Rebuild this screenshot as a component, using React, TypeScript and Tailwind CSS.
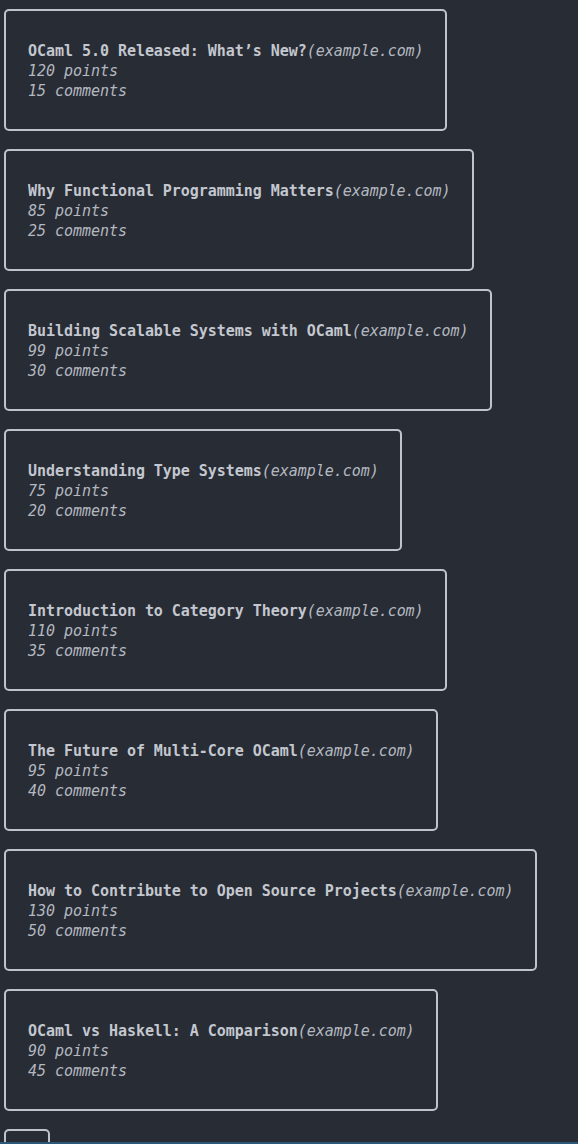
const stories = [
  { title: "OCaml 5.0 Released: What’s New?", points: 120, comments: 15 },
  { title: "Why Functional Programming Matters", points: 85, comments: 25 },
  { title: "Building Scalable Systems with OCaml", points: 99, comments: 30 },
  { title: "Understanding Type Systems", points: 75, comments: 20 },
  { title: "Introduction to Category Theory", points: 110, comments: 35 },
  { title: "The Future of Multi-Core OCaml", points: 95, comments: 40 },
  { title: "How to Contribute to Open Source Projects", points: 130, comments: 50 },
  { title: "OCaml vs Haskell: A Comparison", points: 90, comments: 45 },
];

export default function App() {
  return (
    <div
      className="min-h-screen bg-[#282c34] text-[#c3c7cf] text-[15px] leading-[20px] tracking-[-0.04px]"
      style={{ fontFamily: '"DejaVu Sans Mono", monospace' }}
    >
      <ul className="flex flex-col items-start gap-[18px] pt-[9px] pl-[4px]">
        {stories.map((s) => (
          <li
            key={s.title}
            className="border-2 border-[#bfc3cb] rounded-[5px] pl-[22px] pr-[21px] pt-[30px] pb-[28px] whitespace-nowrap"
          >
            <div>
              <span className="font-bold">{s.title}</span>
              <span className="italic text-[#b4b8c0]">(example.com)</span>
            </div>
            <div className="italic text-[#b4b8c0]">{s.points} points</div>
            <div className="italic text-[#b4b8c0]">{s.comments} comments</div>
          </li>
        ))}
        {/* load more */}
        <li className="border-2 border-[#bfc3cb] rounded-[5px] px-[21px] h-[64px]" />
      </ul>

      <div className="fixed bottom-0 left-0 right-0 h-[2px] bg-[#2c5878]" />
    </div>
  );
}
